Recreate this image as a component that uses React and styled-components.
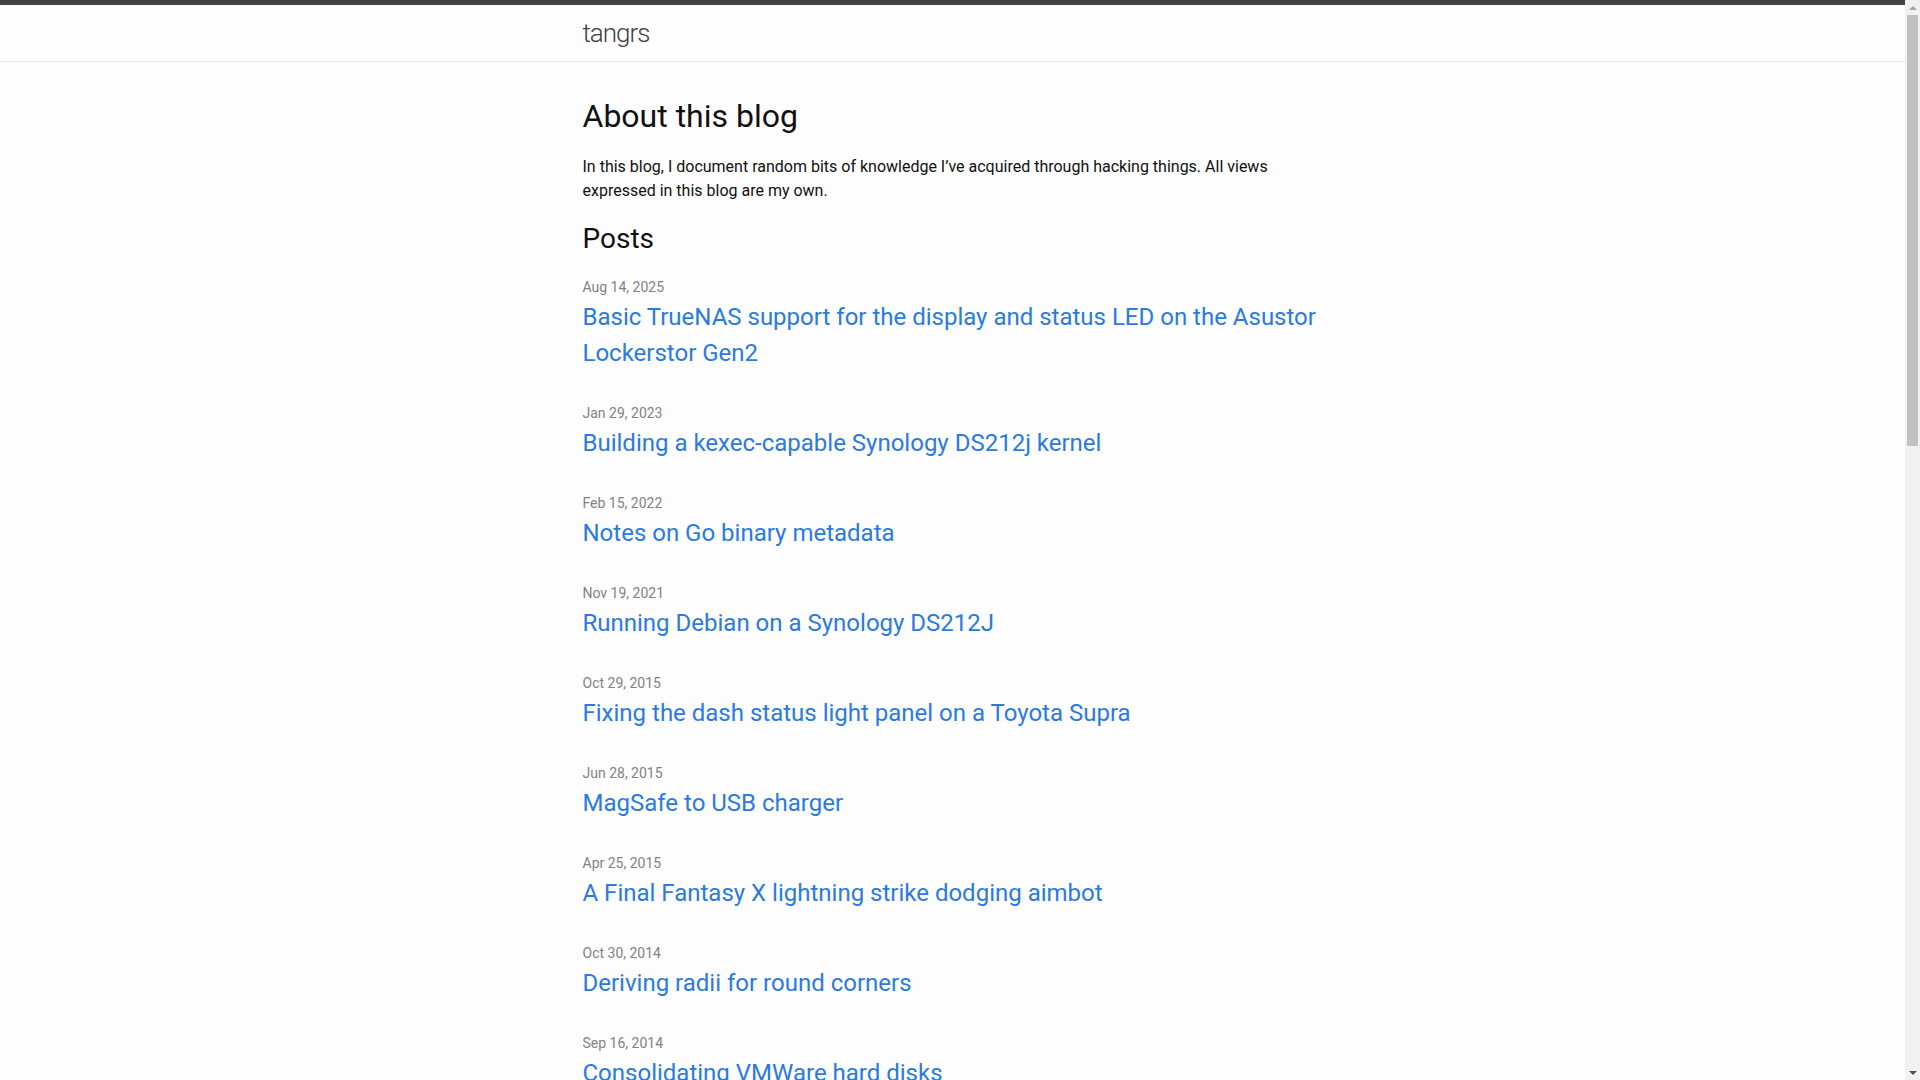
import React from "react";
import styled, { createGlobalStyle } from "styled-components";

const GlobalStyle = createGlobalStyle`
  html, body {
    margin: 0;
    padding: 0;
  }
  body {
    font: 400 16px/1.5 Roboto, "Liberation Sans", sans-serif;
    color: #111;
    background-color: #fdfdfd;
    padding-right: 15px;
  }
`;

// stand-in for the browser scrollbar seen in the screenshot
const ScrollTrack = styled.div`
  position: fixed;
  top: 0;
  right: 0;
  width: 15px;
  height: 100vh;
  background: #f1f1f1;
  display: flex;
  flex-direction: column;
`;

const ScrollButton = styled.div`
  height: 15px;
  display: flex;
  align-items: center;
  justify-content: center;
  &::after {
    content: "";
    width: 0;
    height: 0;
    border-left: 4px solid transparent;
    border-right: 4px solid transparent;
    ${({ $down }) =>
      $down
        ? "border-top: 4px solid #505050;"
        : "border-bottom: 4px solid #a3a3a3;"}
  }
`;

const ThumbArea = styled.div`
  flex: 1;
  padding: 0 2px;
`;

const Thumb = styled.div`
  height: 431px;
  background: #c1c1c1;
`;

const Wrapper = styled.div`
  max-width: 740px;
  margin: 0 auto;
  padding: 0 30px;
`;

const Header = styled.header`
  border-top: 5px solid #424242;
  border-bottom: 1px solid #e8e8e8;
  min-height: 56px;
`;

const SiteTitle = styled.a`
  display: block;
  font-size: 26px;
  font-weight: 300;
  line-height: 56px;
  letter-spacing: -1px;
  color: #424242;
  text-decoration: none;
`;

const Main = styled.main`
  padding: 30px 0;
`;

const PageHeading = styled.h1`
  font-size: 32px;
  font-weight: 400;
  margin: 0 0 15px;
`;

const Intro = styled.p`
  margin: 0 0 15px;
`;

const ListHeading = styled.h2`
  font-size: 28px;
  font-weight: 400;
  margin: 0 0 15px;
`;

const PostList = styled.ul`
  margin: 0;
  padding: 0;
  list-style: none;
`;

const PostItem = styled.li`
  margin-bottom: 30px;
`;

const PostMeta = styled.span`
  font-size: 14px;
  color: #828282;
`;

const PostTitle = styled.h3`
  margin: 0;
  font-weight: 400;
  font-size: 16px;
`;

const PostLink = styled.a`
  display: block;
  font-size: 24px;
  color: #2a7ae2;
  text-decoration: none;
`;

const posts = [
  {
    date: "Aug 14, 2025",
    title:
      "Basic TrueNAS support for the display and status LED on the Asustor Lockerstor Gen2",
  },
  { date: "Jan 29, 2023", title: "Building a kexec-capable Synology DS212j kernel" },
  { date: "Feb 15, 2022", title: "Notes on Go binary metadata" },
  { date: "Nov 19, 2021", title: "Running Debian on a Synology DS212J" },
  { date: "Oct 29, 2015", title: "Fixing the dash status light panel on a Toyota Supra" },
  { date: "Jun 28, 2015", title: "MagSafe to USB charger" },
  { date: "Apr 25, 2015", title: "A Final Fantasy X lightning strike dodging aimbot" },
  { date: "Oct 30, 2014", title: "Deriving radii for round corners" },
  { date: "Sep 16, 2014", title: "Consolidating VMWare hard disks" },
];

const App = () => {
  return (
    <>
      <GlobalStyle />
      <Header>
        <Wrapper>
          <SiteTitle href="#">tangrs</SiteTitle>
        </Wrapper>
      </Header>
      <Main>
        <Wrapper>
          <PageHeading>About this blog</PageHeading>
          <Intro>
            In this blog, I document random bits of knowledge I’ve acquired
            through hacking things. All views expressed in this blog are my own.
          </Intro>
          <ListHeading>Posts</ListHeading>
          <PostList>
            {posts.map((post) => (
              <PostItem key={post.title}>
                <PostMeta>{post.date}</PostMeta>
                <PostTitle>
                  <PostLink href="#">{post.title}</PostLink>
                </PostTitle>
              </PostItem>
            ))}
          </PostList>
        </Wrapper>
      </Main>
      <ScrollTrack>
        <ScrollButton />
        <ThumbArea>
          <Thumb />
        </ThumbArea>
        <ScrollButton $down />
      </ScrollTrack>
    </>
  );
};

export default App;
